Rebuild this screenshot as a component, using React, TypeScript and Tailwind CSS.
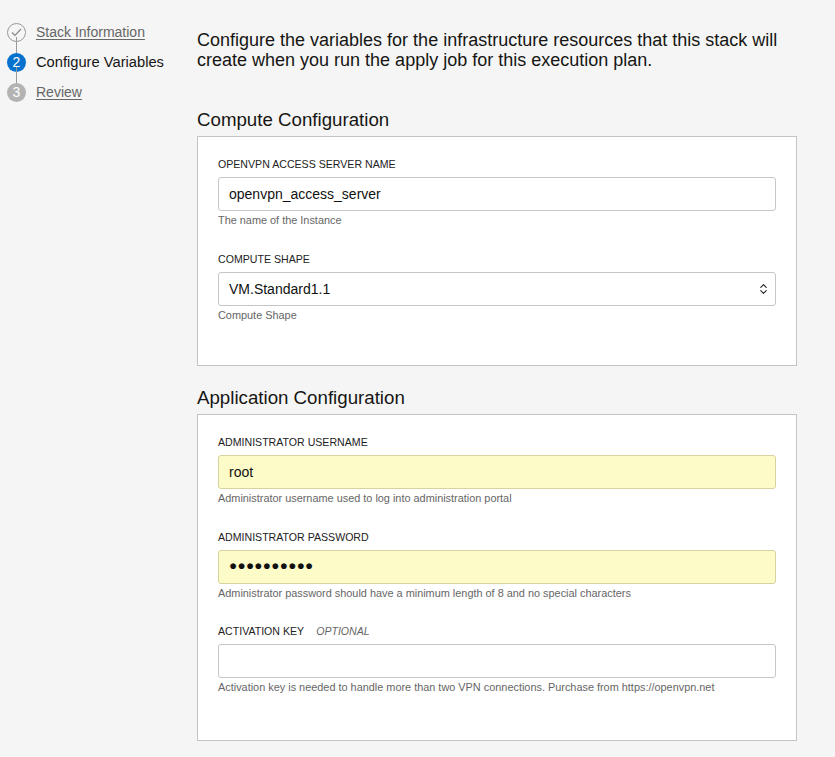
import { ChevronsUpDown } from 'lucide-react'

const steps = [
  { n: 1, label: 'Stack Information', state: 'done' },
  { n: 2, label: 'Configure Variables', state: 'current' },
  { n: 3, label: 'Review', state: 'todo' },
]

function StepDot({ n, state }: { n: number; state: string }) {
  if (state === 'done') {
    return (
      <div className="w-[19px] h-[19px] rounded-full border border-[#9a9a9a] bg-[#f5f5f5] flex items-center justify-center">
        <svg width="11" height="9" viewBox="0 0 11 9" fill="none">
          <path d="M1 4.5 L4 7.5 L10 1" stroke="#8a8a8a" strokeWidth="1.2" />
        </svg>
      </div>
    )
  }
  return (
    <div
      className={`w-[19px] h-[19px] rounded-full flex items-center justify-center text-white text-[14px] leading-none ${
        state === 'current' ? 'bg-[#0572ce]' : 'bg-[#b3b3b3]'
      }`}
    >
      {n}
    </div>
  )
}

function Field({
  label,
  optional,
  help,
  value,
  yellow,
  select,
  password,
}: {
  label: string
  optional?: boolean
  help: string
  value?: string
  yellow?: boolean
  select?: boolean
  password?: boolean
}) {
  return (
    <div className="flex flex-col">
      <div className="flex items-baseline gap-[12px] text-[10.6px] text-[#222] leading-[14px]">
        <span>{label}</span>
        {optional && <span className="italic text-[#666]">OPTIONAL</span>}
      </div>
      <div
        className={`mt-[6px] h-[34px] rounded-[3px] border flex items-center justify-between pl-[10px] pr-[5px] text-[14px] text-[#111] ${
          yellow ? 'bg-[#fdfbc7] border-[#d6d3a0]' : 'bg-white border-[#c6c6c6]'
        }`}
      >
        <span className={password ? 'text-[13.5px] tracking-[0.3px]' : ''}>{value}</span>
        {select && <ChevronsUpDown className="w-[13px] h-[14px] text-[#222]" strokeWidth={2} />}
      </div>
      <div className="mt-[3px] text-[10.9px] text-[#666] leading-[13px]">{help}</div>
    </div>
  )
}

export default function App() {
  return (
    <div
      className="w-[835px] h-[757px] bg-[#f5f5f5] flex overflow-hidden"
      style={{ fontFamily: '"Liberation Sans", Arial, sans-serif' }}
    >
      {/* Stepper */}
      <div className="w-[197px] shrink-0 pl-[7px] pt-[17px]">
        {steps.map((s, i) => (
          <div key={s.n} className="flex items-center h-[30px] relative">
            {i < steps.length - 1 && (
              <div className="absolute left-[9px] top-[20px] h-[20px] w-px bg-[#9a9a9a]" />
            )}
            <StepDot n={s.n} state={s.state} />
            <span
              className={`ml-[10px] ${
                s.state === 'current'
                  ? 'text-[14.7px] text-[#161513]'
                  : 'text-[14px] text-[#666] underline underline-offset-2'
              }`}
            >
              {s.label}
            </span>
          </div>
        ))}
      </div>

      {/* Main */}
      <div className="w-[600px] pt-[31px]">
        <p className="text-[18px] leading-[19.5px] text-[#161513]">
          Configure the variables for the infrastructure resources that this stack will create when you run the apply
          job for this execution plan.
        </p>

        <h2 className="mt-[39px] text-[18.7px] leading-[22px] text-[#161513]">Compute Configuration</h2>
        <div className="mt-[5px] h-[230px] bg-white border border-[#c4c4c4] px-[20px] pt-[20px] flex flex-col gap-[25px]">
          <Field label="OPENVPN ACCESS SERVER NAME" help="The name of the Instance" value="openvpn_access_server" />
          <Field label="COMPUTE SHAPE" help="Compute Shape" value="VM.Standard1.1" select />
        </div>

        <h2 className="mt-[21px] text-[18.7px] leading-[22px] text-[#161513]">Application Configuration</h2>
        <div className="mt-[5px] h-[327px] bg-white border border-[#c4c4c4] px-[20px] pt-[20px] flex flex-col gap-[24.6px]">
          <Field
            label="ADMINISTRATOR USERNAME"
            help="Administrator username used to log into administration portal"
            value="root"
            yellow
          />
          <Field
            label="ADMINISTRATOR PASSWORD"
            help="Administrator password should have a minimum length of 8 and no special characters"
            value="●●●●●●●●●●"
            yellow
            password
          />
          <Field
            label="ACTIVATION KEY"
            optional
            help="Activation key is needed to handle more than two VPN connections. Purchase from https://openvpn.net"
          />
        </div>
      </div>
    </div>
  )
}
